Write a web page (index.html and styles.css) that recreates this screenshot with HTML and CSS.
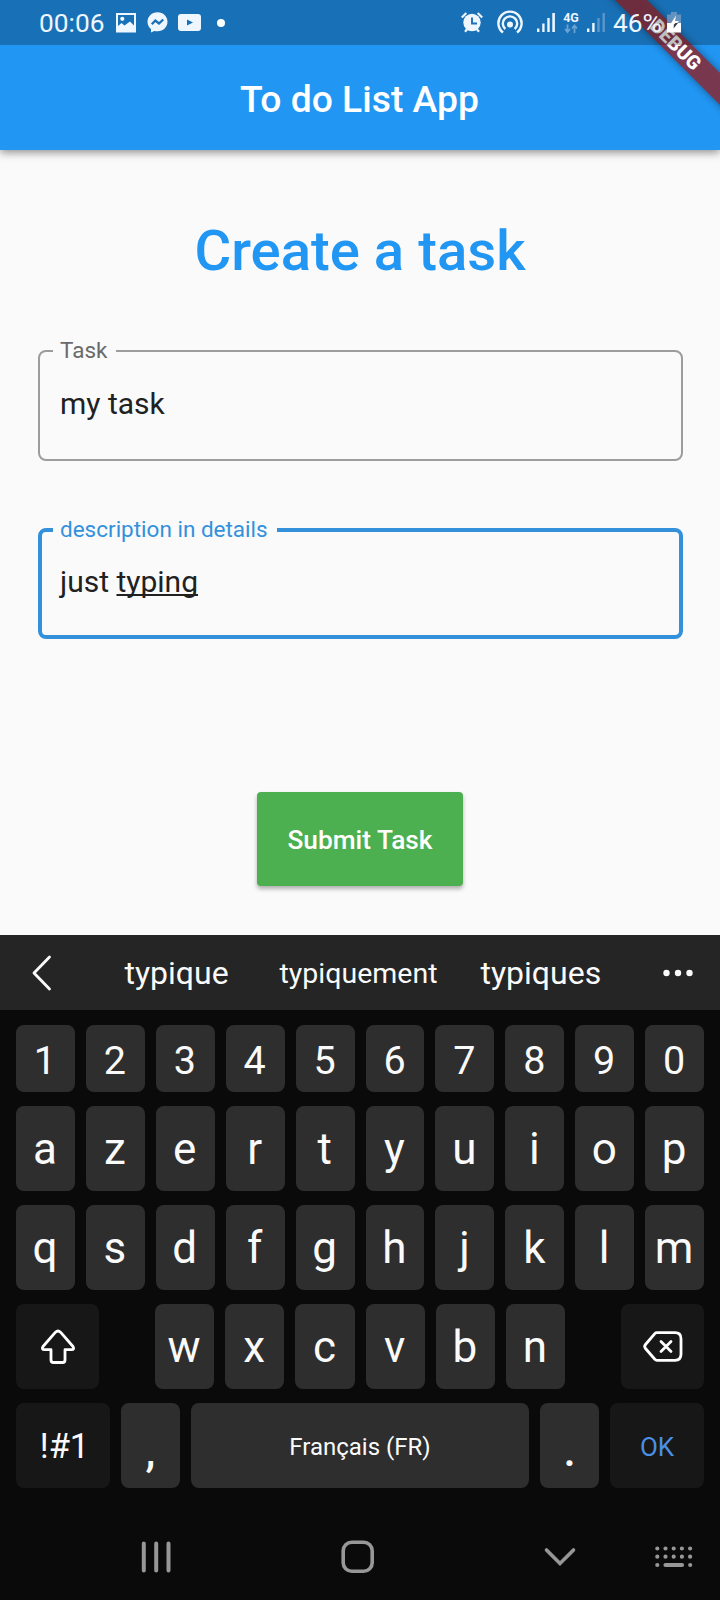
FILE: index.html
```html
<!DOCTYPE html>
<html lang="fr">
<head>
<meta charset="utf-8">
<title>To do List App</title>
<link rel="stylesheet" href="styles.css">
</head>
<body>
<div class="screen">
  <header class="appbar">
    <h1 class="appbar-title">To do List App</h1>
    <svg class="ribbon" width="120" height="120" viewBox="0 0 120 120">
      <defs>
        <filter id="soft" x="-20%" y="-20%" width="140%" height="140%"><feGaussianBlur stdDeviation="4.500"/></filter>
        <linearGradient id="band" x1="0" y1="0" x2="0" y2="1"><stop offset=".42" stop-color="#963a50"/><stop offset=".46" stop-color="#7c364b"/></linearGradient>
      </defs>
      <path d="M5-10 130 115V83L37-10z" fill="#000" fill-opacity=".4" filter="url(#soft)"/>
      <path d="M5-10 130 115V83L37-10z" fill="url(#band)" fill-opacity=".96"/>
      <text class="ribbon-text" transform="translate(76 44.500) rotate(45)" x="0" y="7" text-anchor="middle">DEBUG</text>
    </svg>
    <div class="status">
      <span class="clock">00:06</span>
      <div class="status-left">
        <svg width="20" height="20" viewBox="0 0 20 20"><path fill="#eef6ff" fill-rule="evenodd" d="M0 0h20v19.500H0zM2 2v11l3.500-3 3 2.500L14 8.500l4 4V2z"/><circle cx="6.300" cy="5.800" r="2.100" fill="#eef6ff"/></svg>
        <svg width="21" height="21" viewBox="0 0 21 21"><path fill="#eef6ff" d="M10.500.3C4.800.3.500 4.500.500 9.800c0 3.200 1.400 5.600 3.500 7.300v3.500l3.200-1.700c1 .3 2.100.4 3.300.4 5.700 0 10-4.200 10-9.500S16.200.3 10.500.3z"/><path d="M4.800 12.200 8.300 8.500l3.700 3 4.200-4" fill="none" stroke="#1970b6" stroke-width="2.300"/></svg>
        <svg width="23" height="17" viewBox="0 0 23 17"><rect width="23" height="17" rx="3" fill="#eef6ff"/><path d="M9 5.500v6l6-3z" fill="#1970b6"/></svg>
        <i class="dot"></i>
      </div>
      <div class="status-right">
        <svg class="i-alarm" width="22" height="21" viewBox="0 0 22 21"><circle cx="11" cy="10.500" r="8.700" fill="#eef6ff"/><path d="M.8 5.500 5.300 1M21.200 5.500 16.700 1M4 19.800l2.500-3M18 19.800l-2.500-3" stroke="#eef6ff" stroke-width="2.200"/><path d="M11 5.500v6h5" fill="none" stroke="#1970b6" stroke-width="1.900"/></svg>
        <svg class="i-cast" width="26" height="22" viewBox="0 0 26 22" fill="none" stroke="#eef6ff" stroke-width="2.400"><path d="M6 20.500A11.600 11.600 0 1 1 20 20.500"/><path d="M8.300 17A7.200 7.200 0 1 1 17.700 17"/><circle cx="13" cy="12.500" r="3" fill="#eef6ff" stroke="none"/></svg>
        <svg class="i-signal" width="18" height="19" viewBox="0 0 18 19" fill="#eef6ff"><path d="M0 15.500h2.400V19H0zM5.200 10.500h2.400V19H5.200zM10.300 5h2.400v14h-2.400zM15.300 0h2.600v19h-2.600z"/></svg>
        <svg class="i-4g" width="16" height="22" viewBox="0 0 16 22"><text class="net" x="8" y="10" text-anchor="middle">4G</text><path d="M4.500 12.500v7M2 17l2.500 3L7 17M11.500 21v-7M9 16.500l2.500-3 2.500 3" fill="none" stroke="#6ba2d2" stroke-width="1.800"/></svg>
        <svg class="i-signal2" width="18" height="19" viewBox="0 0 18 19"><path fill="#eef6ff" d="M0 15.500h2.400V19H0zM5.200 10h2.400v9H5.200z"/><path fill="#5b96ca" d="M10.300 5h2.400v14h-2.400zM15.500 0h2.400v19h-2.400z"/></svg>
        <span class="pct">46%</span>
        <svg class="i-batt" width="14" height="21" viewBox="0 0 14 21"><path fill="#8fa6c4" fill-opacity=".65" d="M4 0h6v2.500h4V12H0V2.500h4z"/><path fill="#fff" d="M0 11h14v9.500H0z"/><path fill="#fff" d="M9 3.500 3.500 12H7l-.5 3L12 9H8z"/><path fill="#333a46" d="m6.500 16.500 4.500-5.500H8.500L7 12.500z"/></svg>
      </div>
    </div>
  </header>

  <main class="form">
    <h2 class="heading">Create a task</h2>
    <div class="field">
      <span class="field-label">Task</span>
      <span class="field-value">my task</span>
    </div>
    <div class="field field-active">
      <span class="field-label">description in details</span>
      <span class="field-value">just <span class="composing">typing</span></span>
    </div>
    <button class="submit">Submit Task</button>
  </main>

  <section class="keyboard">
    <div class="suggest">
      <svg class="back" width="20" height="36" viewBox="0 0 20 36"><path d="M17.500 2 2 18l15.500 16" fill="none" stroke="#fafafa" stroke-width="2.800" stroke-linecap="round" stroke-linejoin="round"/></svg>
      <span class="word w1">typique</span>
      <span class="word w2">typiquement</span>
      <span class="word w3">typiques</span>
      <svg class="more" width="30" height="8" viewBox="0 0 30 8" fill="#fafafa"><circle cx="3.500" cy="4" r="3.200"/><circle cx="15" cy="4" r="3.200"/><circle cx="26.500" cy="4" r="3.200"/></svg>
    </div>
    <div class="keys">
      <div class="row digits"><b>1</b><b>2</b><b>3</b><b>4</b><b>5</b><b>6</b><b>7</b><b>8</b><b>9</b><b>0</b></div>
      <div class="row"><b>a</b><b>z</b><b>e</b><b>r</b><b>t</b><b>y</b><b>u</b><b>i</b><b>o</b><b>p</b></div>
      <div class="row"><b>q</b><b>s</b><b>d</b><b>f</b><b>g</b><b>h</b><b>j</b><b>k</b><b>l</b><b>m</b></div>
      <div class="row row-shift">
        <b class="fn"><svg width="34" height="36" viewBox="0 0 34 36"><path d="M14.500 3.200q2.500-2.400 5 0L32 17.500q1.800 3-1.500 3.200H24V31q0 2.500-2.500 2.500h-9Q10 33.500 10 31V20.700H3.500Q.2 20.500 2 17.500z" fill="none" stroke="#fff" stroke-width="2.800" stroke-linejoin="round"/></svg></b>
        <div class="mid"><b>w</b><b>x</b><b>c</b><b>v</b><b>b</b><b>n</b></div>
        <b class="fn"><svg width="40" height="31" viewBox="0 0 40 31" fill="none" stroke="#fff" stroke-width="2.800" stroke-linecap="round" stroke-linejoin="round"><path d="M14 1.700h18q6 0 6 6v15.600q0 6-6 6H14q-1.300 0-2.200-1L2.500 17.500q-1.700-2 0-4L11.800 2.700q.9-1 2.200-1z"/><path d="m18 10.500 10 10m0-10-10 10"/></svg></b>
      </div>
      <div class="row row-space">
        <b class="fn sym">!#1</b><b class="punct">,</b><b class="space">Français (FR)</b><b class="punct">.</b><b class="fn ok">OK</b>
      </div>
    </div>
    <nav class="nav">
      <svg class="n-recent" width="30" height="32" viewBox="0 0 30 32" stroke="#979797" stroke-width="4" stroke-linecap="round"><path d="M2.800 2.500v27M15.200 2.500v27M27.500 2.500v27"/></svg>
      <svg class="n-home" width="34" height="34" viewBox="0 0 34 34"><rect x="2.200" y="2.200" width="29" height="29" rx="8.500" fill="none" stroke="#979797" stroke-width="3.600"/></svg>
      <svg class="n-down" width="32" height="20" viewBox="0 0 32 20"><path d="m2.500 3 13.500 13.500L29.500 3" fill="none" stroke="#979797" stroke-width="3.600" stroke-linecap="round"/></svg>
      <svg class="n-kbd" width="38" height="22" viewBox="0 0 38 22"><g fill="none" stroke="#979797" stroke-width="4.200" stroke-linecap="round"><path d="M2.300 2.500h33" stroke-dasharray="0 8.200"/><path d="M2.300 10.700h33" stroke-dasharray="0 8.200"/><path d="M2.300 19h0M35.200 19h0M10.500 19h16.500"/></g></svg>
    </nav>
  </section>
</div>
</body>
</html>
```
FILE: styles.css
```css
* { box-sizing: border-box; }
body { margin: 0; font-family: Roboto, "Noto Sans", sans-serif; }
svg { display: block; flex: none; overflow: visible; }
.screen { width: 720px; height: 1600px; display: flex; flex-direction: column; background: #fafafa; overflow: hidden; }

.appbar { position: relative; z-index: 1; height: 150px; padding-top: 47px; display: flex; align-items: center; justify-content: center; background: #2196f3; box-shadow: 0 3px 8px rgba(0,0,0,.4); }
.appbar-title { margin: 0; padding-right: 1px; font-size: 37.3px; font-weight: 500; color: #fff; line-height: 44px; }
.ribbon { position: absolute; top: 0; right: 0; overflow: hidden; }
.ribbon-text { font-size: 19.5px; font-weight: 900; fill: #fff; }
.status { position: absolute; inset: 0 0 auto 0; height: 45px; padding: 0 39px; display: flex; align-items: center; background: rgba(0,0,0,.25); color: #eef6ff; }
.clock { width: 66px; font-size: 26.3px; line-height: 46px; }
.status-left { display: flex; align-items: center; gap: 10.5px; margin-left: 11px; }
.dot { width: 8px; height: 8px; border-radius: 50%; background: #fff; margin-left: 5px; }
.status-right { display: flex; align-items: center; margin-left: auto; }
.i-cast { margin-left: 13.5px; }
.i-signal { margin-left: 14px; }
.i-4g { margin-left: 8.500px; }
.net { font-size: 12.500px; font-weight: 700; fill: #eef6ff; }
.i-signal2 { margin-left: 8px; }
.pct { width: 53px; margin-left: 8px; font-size: 26.3px; line-height: 46px; white-space: nowrap; }
.i-batt { margin-left: 1px; }

.form { height: 785px; padding: 68px 37px 0; display: flex; flex-direction: column; align-items: center; }
.heading { margin: 0 0 66px; font-size: 56.25px; font-weight: 500; line-height: 66px; color: #2196f3; }
.field { position: relative; width: 645px; height: 111px; padding: 32px 0 0 20.5px; border: 2px solid #9c9c9c; border-radius: 8px; margin-bottom: 67px; line-height: 40px; }
.field-label { position: absolute; left: 13.5px; top: -16px; padding: 0 9px 0 7px; background: #fafafa; color: #6a6a6a; font-size: 22.5px; line-height: 28px; }
.field-value { font-size: 30px; color: #212121; }
.field-active { border: 4px solid #3391dc; padding: 30px 0 0 18.5px; }
.field-active .field-label { left: 11.5px; top: -17px; color: #3391dc; }
.composing { text-decoration: underline; text-decoration-thickness: 1.500px; text-underline-offset: 2px; text-decoration-skip-ink: none; }
.submit { width: 206px; height: 94px; margin-top: 86px; border: 0; padding: 1px 0 0; border-radius: 4px; background: #4caf50; color: #fff; font: 500 26.25px Roboto, sans-serif; box-shadow: 0 3px 4px rgba(0,0,0,.3); }

.keyboard { flex: 1; background: #0a0a0a; color: #fafafa; display: flex; flex-direction: column; }
.suggest { height: 75px; padding: 0 27px 0 31.5px; display: flex; align-items: center; background: #252525; }
.word { padding-top: 1px; text-align: center; line-height: 75px; white-space: nowrap; }
.w1 { width: 104px; margin-left: 73px; font-size: 32px; }
.w2 { width: 158px; margin-left: 51px; font-size: 28.500px; }
.w3 { width: 120px; margin-left: 43px; font-size: 32px; }
.more { margin-left: auto; }
.keys { padding: 15px 16px 0; display: flex; flex-direction: column; gap: 14px; }
.row { display: flex; gap: 11px; height: 85px; }
.row b { flex: 1 1 0; display: flex; align-items: center; justify-content: center; padding: 1px 1px 0 0; border-radius: 8px; background: #2e2e2e; font-weight: 400; font-size: 44px; color: #fafafa; }
.row b.fn { background: #171717; }
.row.digits { height: 67px; }
.row.digits b { font-size: 39.5px; padding: 4px 1px 0 0; }
.row-shift { justify-content: space-between; }
.row-shift b.fn { flex: 0 0 83px; padding: 0; }
.row-shift .mid { display: flex; gap: 11px; width: 410px; }
.row-space b.sym { flex: 0 0 94px; font-size: 34.5px; padding: 1px 0 0 3px; }
.row-space b.punct { flex: 0 0 59px; font-weight: 500; padding: 10px 0 0; }
.row-space b.space { font-size: 24px; padding: 3px 0 0; }
.row-space b.ok { flex: 0 0 94px; font-size: 26px; padding: 2px 0 0; color: #4a8fe4; }
.nav { display: flex; align-items: center; flex: 1; padding: 26px 27px 0 141px; }
.n-home { margin-left: 170px; }
.n-down { margin-left: 169px; }
.n-kbd { margin-left: auto; }
```
